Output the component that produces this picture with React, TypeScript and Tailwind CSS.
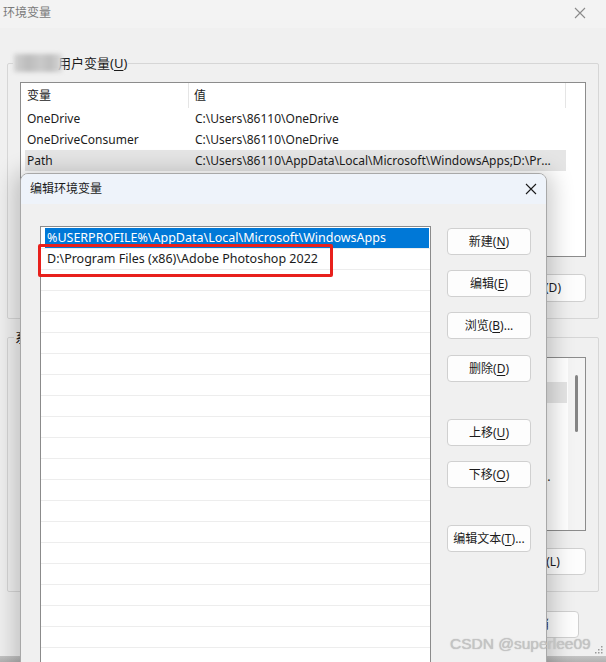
import React from "react";

const font = "font-['Noto_Sans','Noto_Sans_CJK_SC',sans-serif]";

function Accel({ label, k, tail = "" }: { label: string; k: string; tail?: string }) {
  return (
    <span>
      {label}(<span className="underline underline-offset-2">{k}</span>){tail}
    </span>
  );
}

function Btn({ children, className = "" }: { children: React.ReactNode; className?: string }) {
  return (
    <div
      className={`flex h-[27px] items-center justify-center rounded-[4px] border border-[#d0d0d0] bg-[#fdfdfd] text-[12px] text-[#1b1b1b] ${className}`}
    >
      {children}
    </div>
  );
}

function CloseIcon({ color = "#1b1b1b" }: { color?: string }) {
  return (
    <svg width="12" height="12" viewBox="0 0 12 12">
      <path d="M1 1 L11 11 M11 1 L1 11" stroke={color} strokeWidth="1.1" />
    </svg>
  );
}

const userVars = [
  ["OneDrive", "C:\\Users\\86110\\OneDrive"],
  ["OneDriveConsumer", "C:\\Users\\86110\\OneDrive"],
  ["Path", "C:\\Users\\86110\\AppData\\Local\\Microsoft\\WindowsApps;D:\\Program Files (x86)\\Adobe Photoshop 2022"],
  ["TEMP", "C:\\Users\\86110\\AppData\\Local\\Temp"],
  ["TMP", "C:\\Users\\86110\\AppData\\Local\\Temp"],
];

const sysVars = [
  ["ComSpec", "C:\\Windows\\system32\\cmd.exe"],
  ["DriverData", "C:\\Windows\\System32\\Drivers\\DriverData"],
  ["NUMBER_OF_PROCESSORS", "16"],
  ["OS", "Windows_NT"],
  ["Path", "C:\\Windows\\system32;C:\\Windows;C:\\Windows\\System32\\Wbem;C:\\Windows\\System32\\WindowsPowerShell\\v1.0\\"],
  ["PATHEXT", ".COM;.EXE;.BAT;.CMD;.VBS;.VBE;.JS;.JSE;.WSF;.WSH;.MSC"],
  ["PROCESSOR_ARCHITECTURE", "AMD64"],
];

const paths = [
  "%USERPROFILE%\\AppData\\Local\\Microsoft\\WindowsApps",
  "D:\\Program Files (x86)\\Adobe Photoshop 2022",
];

export default function App() {
  const emptyRows = Array.from({ length: 20 });
  return (
    <div className={`relative h-[662px] w-[606px] overflow-hidden bg-[#f0f0f0] ${font}`}>
      {/* 环境变量 window */}
      <div className="flex h-[656px] flex-col bg-[#f0f0f0]">
        <div className="flex h-[28px] items-center justify-between bg-[#f3f3f3] pb-[3px] pl-[3px] pr-[20px]">
          <span className="text-[12px] text-[#7a7a7a]">环境变量</span>
          <CloseIcon color="#8a8a8a" />
        </div>

        <fieldset className="ml-[7px] mt-[26px] w-[590px] rounded-[2px] border border-[#d6d6d6]">
          <legend className="ml-[5px] flex items-center px-[1px] text-[13px] leading-[18px] text-[#1b1b1b]">
            <span className="mr-[-4px] inline-block h-[18px] w-[48px] bg-[linear-gradient(90deg,#d0d0d0,#bcbcbc_30%,#cacaca_55%,#bebebe_75%,#d8d8d8)] blur-[2px]" />
            用户变量(<span className="underline underline-offset-2">U</span>)
          </legend>
          <div className="px-[12px] pb-[16px] pt-[10px]">
            <div className="h-[175px] w-[566px] overflow-hidden border border-[#8c8c8c] bg-white text-[12px] text-[#1b1b1b]">
              <div className="flex h-[25px] items-center">
                <div className="h-full w-[168px] border-r border-[#e5e5e5] pl-[6px] leading-[25px]">变量</div>
                <div className="h-full w-[377px] border-r border-[#e5e5e5] pl-[5px] leading-[25px]">值</div>
              </div>
              {userVars.map(([n, v], i) => (
                <div
                  key={n}
                  className={`ml-[4px] flex h-[21px] w-[541px] items-center ${i === 2 ? "bg-[#e5e5e5]" : ""}`}
                >
                  <span className="w-[168px] shrink-0 pl-[2px]">{n}</span>
                  <span className="truncate pl-[2px] pr-[12px]">{v}</span>
                </div>
              ))}
            </div>
            <div className="mt-[17px] flex justify-end gap-[8px]">
              <Btn className="h-[28px] w-[90px]">
                <Accel label="新建" k="N" tail="..." />
              </Btn>
              <Btn className="h-[28px] w-[90px]">
                <Accel label="编辑" k="E" tail="..." />
              </Btn>
              <Btn className="h-[28px] w-[90px]">
                <span>删除(D)</span>
              </Btn>
            </div>
          </div>
        </fieldset>

        <fieldset className="ml-[7px] mt-[9px] w-[590px] rounded-[2px] border border-[#d6d6d6]">
          <legend className="ml-[6px] px-[1px] text-[13px] leading-[18px] text-[#1b1b1b]">
            系统变量(<span className="underline underline-offset-2">S</span>)
          </legend>
          <div className="px-[12px] pb-[16px] pt-[11px]">
            <div className="flex h-[174px] w-[566px] overflow-hidden border border-[#8c8c8c] bg-white text-[12px] text-[#1b1b1b]">
              <div className="w-[547px]">
                <div className="flex h-[24px] items-center">
                  <div className="h-full w-[168px] border-r border-[#e5e5e5] pl-[6px] leading-[24px]">变量</div>
                  <div className="h-full w-[358px] border-r border-[#e5e5e5] pl-[5px] leading-[24px]">值</div>
                </div>
                {sysVars.map(([n, v], i) => (
                  <div
                    key={n}
                    className={`ml-[4px] flex h-[21px] w-[542px] items-center ${i === 0 ? "bg-[#e5e5e5]" : ""}`}
                  >
                    <span className="w-[168px] shrink-0 pl-[2px]">{n}</span>
                    <span className="truncate pl-[2px] pr-[16px]">{v}</span>
                  </div>
                ))}
              </div>
              <div className="flex w-[17px] justify-center bg-[#f4f4f4] pt-[17px]">
                <div className="h-[57px] w-[3px] rounded-full bg-[#858585]" />
              </div>
            </div>
            <div className="mt-[17px] flex justify-end gap-[8px]">
              <Btn className="w-[90px]">新建(W)...</Btn>
              <Btn className="w-[90px]">编辑(I)...</Btn>
              <Btn className="w-[90px]">删除(L)</Btn>
            </div>
          </div>
        </fieldset>

        <div className="mt-[19px] flex justify-end gap-[8px] pr-[27px]">
          <Btn className="w-[84px]">确定</Btn>
          <Btn className="w-[84px]">取消</Btn>
        </div>
      </div>
      <div className="h-[6px] bg-[linear-gradient(180deg,#c4c4c4,#b2b2b2)]" />

      {/* resize grip */}
      <svg className="absolute left-[594px] top-[645px]" width="10" height="10" viewBox="0 0 10 10">
        <g fill="#9a9a9a">
          <rect x="7" y="1" width="1.5" height="1.5" />
          <rect x="4" y="4" width="1.5" height="1.5" />
          <rect x="7" y="4" width="1.5" height="1.5" />
          <rect x="1" y="7" width="1.5" height="1.5" />
          <rect x="4" y="7" width="1.5" height="1.5" />
          <rect x="7" y="7" width="1.5" height="1.5" />
        </g>
      </svg>

      {/* 编辑环境变量 dialog */}
      <div className="absolute left-[20px] top-[173px] h-[520px] w-[527px] overflow-hidden rounded-t-[8px] border border-[#a8a8a8] bg-[#f0f0f0] shadow-[0_4px_22px_6px_rgba(0,0,0,0.2)]">
        <div className="flex h-[30px] items-center justify-between bg-[#eef3fa] pl-[9px] pr-[9px]">
          <span className="text-[12px] text-[#1b1b1b]">编辑环境变量</span>
          <CloseIcon />
        </div>
        <div className="relative flex pl-[19px] pt-[22px]">
          <div className="h-[500px] w-[391px] overflow-hidden border border-[#8b8b8b] bg-white text-[12.5px] text-[#1b1b1b]">
            {paths.map((p, i) => (
              <div key={p} className="h-[21px] border-b border-[#ededed]">
                {i === 0 ? (
                  <div className="ml-[4px] mr-[1px] mt-[1px] flex h-[20px] items-center bg-[#0078d7] pl-[2px] text-white">
                    {p}
                  </div>
                ) : (
                  <div className="flex h-[20px] items-center pl-[6px]">{p}</div>
                )}
              </div>
            ))}
            {emptyRows.map((_, i) => (
              <div key={i} className="h-[21px] border-b border-[#ededed]" />
            ))}
          </div>
          <div className="ml-[16px] mt-[2px] flex w-[84px] flex-col">
            <Btn>
              <Accel label="新建" k="N" />
            </Btn>
            <Btn className="mt-[15px]">
              <Accel label="编辑" k="E" />
            </Btn>
            <Btn className="mt-[15px]">
              <Accel label="浏览" k="B" tail="..." />
            </Btn>
            <Btn className="mt-[16px]">
              <Accel label="删除" k="D" />
            </Btn>
            <Btn className="mt-[37px]">
              <Accel label="上移" k="U" />
            </Btn>
            <Btn className="mt-[15px]">
              <Accel label="下移" k="O" />
            </Btn>
            <Btn className="mt-[37px]">
              <Accel label="编辑文本" k="T" tail="..." />
            </Btn>
          </div>
          {/* red highlight box */}
          <div className="absolute left-[17px] top-[40px] h-[33px] w-[295px] rounded-[2px] border-[3px] border-[#e8201c]" />
        </div>
      </div>

      {/* watermark */}
      <div className="absolute left-[450px] top-[632px] font-['Liberation_Sans',sans-serif] text-[15.5px] text-[#c4c4c4] [text-shadow:0_0_1px_rgba(120,120,120,0.5)]">
        CSDN @superlee09
      </div>
    </div>
  );
}
